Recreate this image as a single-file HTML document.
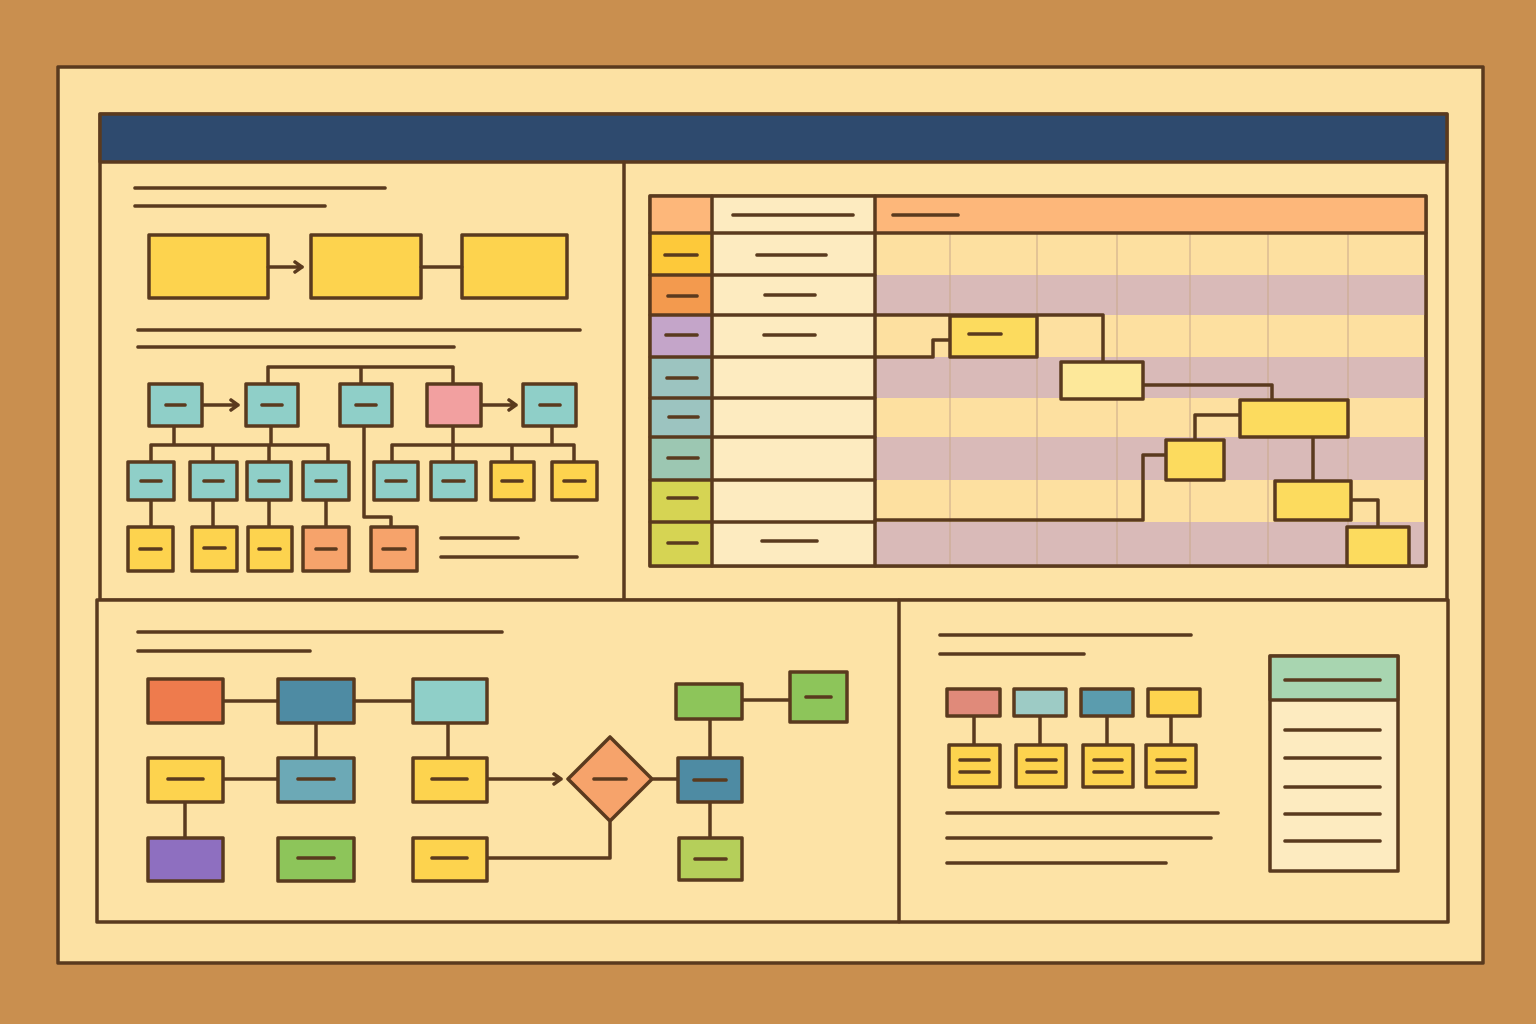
<!DOCTYPE html>
<html><head><meta charset="utf-8"><style>html,body{margin:0;padding:0;background:#C98F4F}svg{display:block}</style></head><body>
<svg width="1536" height="1024" viewBox="0 0 1536 1024" xmlns="http://www.w3.org/2000/svg">
<rect width="1536" height="1024" fill="#C98F4F"/>
<g stroke="#5A3A1E" stroke-width="3.5" stroke-linecap="round" stroke-linejoin="round">
<rect x="58" y="67" width="1425" height="896" fill="#FCE1A3"/>
<rect x="100" y="114" width="1347" height="486" fill="#FDE3A6"/>
<rect x="100" y="114" width="1347" height="48" fill="#2E4A6E"/>
<line x1="624" y1="162" x2="624" y2="600"/>
<rect x="97" y="600" width="1351" height="322" fill="#FDE3A6"/>
<line x1="899" y1="600" x2="899" y2="922"/>

<line x1="135" y1="188" x2="385" y2="188"/><line x1="135" y1="206" x2="325" y2="206"/>
<line x1="138" y1="330" x2="580" y2="330"/><line x1="138" y1="347" x2="454" y2="347"/>
<line x1="441" y1="538" x2="518" y2="538"/><line x1="441" y1="557" x2="577" y2="557"/>
<rect x="149" y="235" width="119" height="63" fill="#FDD34E"/>
<rect x="311" y="235" width="110" height="63" fill="#FDD34E"/>
<rect x="462" y="235" width="105" height="63" fill="#FDD34E"/>
<line x1="268" y1="267" x2="302" y2="267"/><path d="M295 262 L302 267 L295 272" fill="none"/>
<line x1="421" y1="267" x2="462" y2="267"/>

<g fill="none">
<path d="M268 384 V367 H453 V384 M361 367 V384"/>
<path d="M202 405 H238 M231 400 L238 405 L231 410"/>
<path d="M481 405 H516 M509 400 L516 405 L509 410"/>
<path d="M174 426 V445 M271 426 V445 M151 462 V445 H328 V462 M213 445 V462 M269 445 V462"/>
<path d="M453 426 V445 M552 426 V445 M392 462 V445 H574 V462 M453 445 V462 M512 445 V462"/>
<path d="M151 500 V527 M213 500 V527 M269 500 V527 M326 500 V527"/>
<path d="M364 426 V517 H391 V527"/>
</g>
<g fill="#8FCFC8">
<rect x="149" y="384" width="53" height="42"/><rect x="246" y="384" width="52" height="42"/><rect x="340" y="384" width="52" height="42"/><rect x="523" y="384" width="53" height="42"/>
<rect x="128" y="462" width="46" height="38"/><rect x="190" y="462" width="47" height="38"/><rect x="247" y="462" width="44" height="38"/><rect x="303" y="462" width="46" height="38"/>
<rect x="374" y="462" width="44" height="38"/><rect x="431" y="462" width="45" height="38"/>
</g>
<rect x="427" y="384" width="54" height="42" fill="#F2A0A0"/>
<g fill="#FDD34E">
<rect x="491" y="462" width="43" height="38"/><rect x="552" y="462" width="45" height="38"/>
<rect x="128" y="527" width="45" height="44"/><rect x="192" y="527" width="45" height="44"/><rect x="248" y="527" width="44" height="44"/>
</g>
<g fill="#F6A36B"><rect x="303" y="527" width="46" height="44"/><rect x="371" y="527" width="46" height="44"/></g>
<g>
<line x1="166" y1="405" x2="185" y2="405"/><line x1="262" y1="405" x2="282" y2="405"/><line x1="356" y1="405" x2="376" y2="405"/><line x1="540" y1="405" x2="560" y2="405"/>
<line x1="141" y1="481" x2="161" y2="481"/><line x1="204" y1="481" x2="223" y2="481"/><line x1="259" y1="481" x2="279" y2="481"/><line x1="316" y1="481" x2="336" y2="481"/>
<line x1="386" y1="481" x2="406" y2="481"/><line x1="443" y1="481" x2="464" y2="481"/><line x1="502" y1="481" x2="522" y2="481"/><line x1="564" y1="481" x2="585" y2="481"/>
<line x1="140" y1="549" x2="161" y2="549"/><line x1="204" y1="548" x2="225" y2="548"/><line x1="259" y1="549" x2="280" y2="549"/><line x1="316" y1="549" x2="336" y2="549"/><line x1="383" y1="549" x2="405" y2="549"/>
</g>

<rect x="650" y="196" width="776" height="370" fill="#FDE0A0"/>
<g stroke="none">
<rect x="650" y="196" width="62" height="37" fill="#FDB77A"/>
<rect x="712" y="196" width="163" height="37" fill="#FDEBC0"/>
<rect x="875" y="196" width="551" height="37" fill="#FDB77A"/>
<rect x="712" y="233" width="163" height="333" fill="#FDEBC0"/>
<rect x="875" y="275" width="551" height="40" fill="#D9BAB8"/>
<rect x="875" y="357" width="551" height="41" fill="#D9BAB8"/>
<rect x="875" y="437" width="551" height="43" fill="#D9BAB8"/>
<rect x="875" y="522" width="551" height="44" fill="#D9BAB8"/>
<rect x="650" y="233" width="62" height="42" fill="#FDC93A"/>
<rect x="650" y="275" width="62" height="40" fill="#F39A4E"/>
<rect x="650" y="315" width="62" height="42" fill="#C4A5C9"/>
<rect x="650" y="357" width="62" height="41" fill="#9CC4C0"/>
<rect x="650" y="398" width="62" height="39" fill="#9CC4C0"/>
<rect x="650" y="437" width="62" height="43" fill="#9CC7B2"/>
<rect x="650" y="480" width="62" height="42" fill="#D6D453"/>
<rect x="650" y="522" width="62" height="44" fill="#D6D453"/>
</g>
<g stroke="#C9A88A" stroke-width="1">
<line x1="950" y1="233" x2="950" y2="566"/><line x1="1037" y1="233" x2="1037" y2="566"/><line x1="1117" y1="233" x2="1117" y2="566"/><line x1="1190" y1="233" x2="1190" y2="566"/><line x1="1268" y1="233" x2="1268" y2="566"/><line x1="1348" y1="233" x2="1348" y2="566"/>
</g>
<line x1="650" y1="233" x2="1426" y2="233"/>
<path d="M650 275 H875 M650 315 H875 M650 357 H875 M650 398 H875 M650 437 H875 M650 480 H875 M650 522 H875" fill="none"/>
<line x1="712" y1="196" x2="712" y2="566"/><line x1="875" y1="196" x2="875" y2="566"/>
<rect x="650" y="196" width="776" height="370" fill="none"/>
<g fill="none">
<path d="M875 357 H933 V340 H950"/>
<path d="M875 315 H1103 V362"/>
<path d="M1143 385 H1272 V400"/>
<path d="M1240 415 H1195 V440"/>
<path d="M1313 437 V481"/>
<path d="M875 520 H1143 V455 H1166"/>
<path d="M1351 500 H1378 V527"/>
</g>
<rect x="950" y="316" width="87" height="41" fill="#FCDB5E"/>
<rect x="1061" y="362" width="82" height="37" fill="#FDE89A"/>
<rect x="1240" y="400" width="108" height="37" fill="#FCDB5E"/>
<rect x="1166" y="440" width="58" height="40" fill="#FCDB5E"/>
<rect x="1275" y="481" width="76" height="39" fill="#FCDB5E"/>
<rect x="1347" y="527" width="62" height="39" fill="#FCDB5E"/>
<g>
<line x1="733" y1="215" x2="853" y2="215"/><line x1="893" y1="215" x2="958" y2="215"/>
<line x1="757" y1="255" x2="826" y2="255"/><line x1="765" y1="295" x2="815" y2="295"/><line x1="764" y1="335" x2="815" y2="335"/><line x1="762" y1="541" x2="817" y2="541"/>
<line x1="665" y1="255" x2="697" y2="255"/><line x1="668" y1="296" x2="697" y2="296"/><line x1="666" y1="335" x2="697" y2="335"/><line x1="667" y1="378" x2="697" y2="378"/><line x1="669" y1="417" x2="698" y2="417"/><line x1="668" y1="458" x2="698" y2="458"/><line x1="668" y1="498" x2="697" y2="498"/><line x1="668" y1="543" x2="697" y2="543"/>
<line x1="969" y1="334" x2="1001" y2="334"/>
</g>

<line x1="138" y1="632" x2="502" y2="632"/><line x1="138" y1="651" x2="310" y2="651"/>
<g fill="none">
<path d="M223 701 H278 M354 701 H413 M316 723 V758 M448 723 V758 M223 779 H278 M185 802 V838"/>
<path d="M487 779 H561 M554 774 L561 779 L554 784"/>
<path d="M652 779 H678 M710 719 V758 M710 802 V838 M742 700 H790"/>
<path d="M487 858 H610 V821"/>
</g>
<rect x="148" y="679" width="75" height="44" fill="#EE7B4D"/>
<rect x="278" y="679" width="76" height="44" fill="#4E8BA3"/>
<rect x="413" y="679" width="74" height="44" fill="#8FCFC8"/>
<rect x="148" y="758" width="75" height="44" fill="#FDD34E"/>
<rect x="278" y="758" width="76" height="44" fill="#6CA9B6"/>
<rect x="413" y="758" width="74" height="44" fill="#FDD34E"/>
<rect x="148" y="838" width="75" height="43" fill="#8E6FC0"/>
<rect x="278" y="838" width="76" height="43" fill="#8DC55A"/>
<rect x="413" y="838" width="74" height="43" fill="#FDD34E"/>
<polygon points="610,737 652,779 610,821 568,779" fill="#F6A36B"/>
<rect x="678" y="758" width="64" height="44" fill="#4E8BA3"/>
<rect x="676" y="684" width="66" height="35" fill="#8DC55A"/>
<rect x="790" y="672" width="57" height="50" fill="#8DC55A"/>
<rect x="679" y="838" width="63" height="42" fill="#B5CF5A"/>
<g>
<line x1="168" y1="779" x2="203" y2="779"/><line x1="298" y1="779" x2="334" y2="779"/><line x1="432" y1="779" x2="467" y2="779"/>
<line x1="298" y1="858" x2="334" y2="858"/><line x1="432" y1="858" x2="467" y2="858"/>
<line x1="594" y1="779" x2="626" y2="779"/><line x1="694" y1="780" x2="726" y2="780"/><line x1="806" y1="697" x2="831" y2="697"/><line x1="695" y1="859" x2="726" y2="859"/>
</g>

<line x1="940" y1="635" x2="1191" y2="635"/><line x1="940" y1="654" x2="1084" y2="654"/>
<path d="M974 716 V745 M1040 716 V745 M1107 716 V745 M1171 716 V745" fill="none"/>
<rect x="947" y="689" width="53" height="27" fill="#E08A7A"/>
<rect x="1014" y="689" width="52" height="27" fill="#9DCBC5"/>
<rect x="1081" y="689" width="52" height="27" fill="#5B9CAE"/>
<rect x="1148" y="689" width="52" height="27" fill="#FDD34E"/>
<g fill="#FDD34E"><rect x="949" y="745" width="51" height="42"/><rect x="1016" y="745" width="50" height="42"/><rect x="1083" y="745" width="50" height="42"/><rect x="1146" y="745" width="50" height="42"/></g>
<g>
<line x1="960" y1="760" x2="989" y2="760"/><line x1="960" y1="772" x2="989" y2="772"/>
<line x1="1027" y1="760" x2="1056" y2="760"/><line x1="1027" y1="772" x2="1056" y2="772"/>
<line x1="1094" y1="760" x2="1122" y2="760"/><line x1="1094" y1="772" x2="1122" y2="772"/>
<line x1="1157" y1="760" x2="1185" y2="760"/><line x1="1157" y1="772" x2="1185" y2="772"/>
</g>
<line x1="947" y1="813" x2="1218" y2="813"/><line x1="947" y1="838" x2="1211" y2="838"/><line x1="947" y1="863" x2="1166" y2="863"/>
<rect x="1270" y="656" width="128" height="215" fill="#FDEBC0"/>
<rect x="1270" y="656" width="128" height="44" fill="#A8D5B0"/>
<g>
<line x1="1285" y1="680" x2="1380" y2="680"/><line x1="1285" y1="730" x2="1380" y2="730"/><line x1="1285" y1="758" x2="1380" y2="758"/><line x1="1285" y1="787" x2="1380" y2="787"/><line x1="1285" y1="814" x2="1380" y2="814"/><line x1="1285" y1="841" x2="1380" y2="841"/>
</g>
</g>
</svg>
</body></html>
